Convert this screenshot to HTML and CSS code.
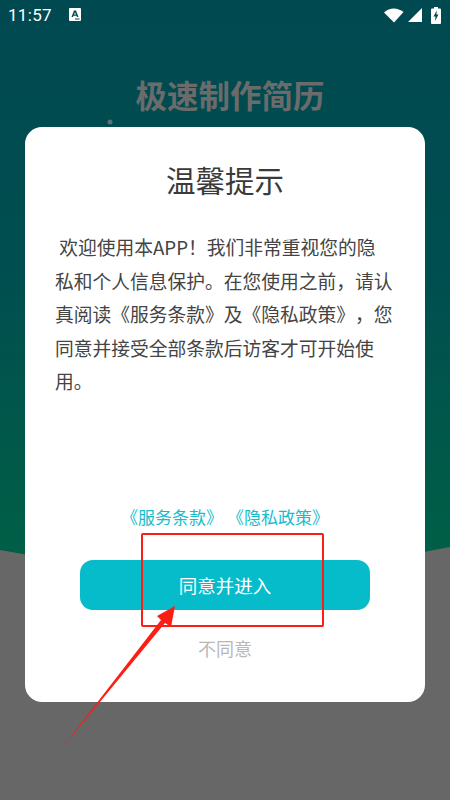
FILE: index.html
```html
<!DOCTYPE html>
<html lang="zh-CN">
<head>
<meta charset="utf-8">
<title>温馨提示</title>
<link rel="stylesheet" href="styles.css">
</head>
<body>
<div class="screen">
  <svg class="backdrop" width="450" height="800" viewBox="0 0 450 800">
    <defs>
      <linearGradient id="bg" x1="0" y1="0" x2="0" y2="1">
        <stop offset="0" stop-color="#004950"/>
        <stop offset="0.5" stop-color="#004f50"/>
        <stop offset="1" stop-color="#006045"/>
      </linearGradient>
    </defs>
    <rect width="450" height="800" fill="#676767"/>
    <path d="M0 550Q225 592 450 547V0H0Z" fill="url(#bg)"/>
    <circle cx="110" cy="122" r="2.500" fill="#587274"/>
  </svg>
  <header class="status">
    <span class="time">11:57</span>
    <svg class="a-icon" width="12" height="13" viewBox="0 0 12 13">
      <path fill="#fff" d="M1 0h10a1 1 0 0 1 1 1v11a1 1 0 0 1-1 1H1a1 1 0 0 1-1-1V1a1 1 0 0 1 1-1z"/>
      <path fill="#004950" d="M5 2.500h2l2.500 6.500H8L7.500 7.700h-3L4 9H2.500zM6 4.300 5 6.500h2zM6 10.500h4.500v1H6z"/>
    </svg>
    <span class="status-right">
      <svg width="20" height="15" viewBox="0 0 20 15"><path fill="#fff" d="M0 4.500C5.500-.9 13.500-.9 19.500 4L10 14.500z"/></svg>
      <svg width="14" height="14" viewBox="0 0 14 14"><path fill="#fff" d="M14 0v14H0z"/></svg>
      <svg width="10" height="17" viewBox="0 0 10 17"><path fill="#fff" d="M3 0h4v1.500h2a1 1 0 0 1 1 1V16a1 1 0 0 1-1 1H1a1 1 0 0 1-1-1V2.500a1 1 0 0 1 1-1h2z"/><path fill="#004950" d="M5.800 3.500 2.500 9.500h2l-.5 4.500 3.500-6.500h-2z"/></svg>
    </span>
  </header>
  <h2 class="brand">极速制作简历</h2>
  <main class="card">
    <h1 class="card-title">温馨提示</h1>
    <p class="card-text"> 欢迎使用本APP&#xFF01;我们非常重视您的隐私和个人信息保护。在您使用之前&#xFF0C;请认真阅读《服务条款》及《隐私政策》&#xFF0C;您同意并接受全部条款后访客才可开始使用。</p>
    <div class="links"><a>《服务条款》</a><a>《隐私政策》</a></div>
    <button class="agree">同意并进入</button>
    <div class="decline">不同意</div>
  </main>
  <div class="mark-box"></div>
  <svg class="mark-arrow" width="450" height="800" viewBox="0 0 450 800">
    <path fill="#fb1e14" d="M62 748 161 620 157 616 175 606 171 627 165 623Z"/>
  </svg>
</div>
</body>
</html>
```
FILE: styles.css
```css
* { box-sizing: border-box; }
html, body { margin: 0; padding: 0; }
body { font-family: "Noto Sans CJK SC", "Noto Sans", sans-serif; text-spacing-trim: space-all; }
.screen { position: relative; width: 450px; height: 800px; overflow: hidden; }
.backdrop, .mark-arrow { position: absolute; left: 0; top: 0; }
.status {
  position: relative; height: 30px; padding: 0 8px 0 8px;
  display: flex; align-items: center; color: #fff;
}
.time { font: 400 17px/30px Roboto, sans-serif; letter-spacing: .3px; }
.a-icon { margin-left: 17px; margin-top: -1px; }
.status-right { margin-left: auto; display: flex; align-items: center; gap: 4px; padding-right: 1px; }
.status-right svg:last-child { margin-left: 5px; }
.brand {
  position: relative; margin: 39px 0 0; height: 50px; padding-left: 10px;
  text-align: center; color: #6b6b6b;
  font-size: 31.5px; line-height: 50px; font-weight: 700;
}
.card {
  position: relative; margin: 8px 25px 0; height: 575px;
  background: #fff; border-radius: 17px; padding: 28px 30px 0;
  display: flex; flex-direction: column;
}
.card-title {
  margin: 0; text-align: center; font-size: 29.5px; line-height: 48px;
  font-weight: 400; color: #3a3a3a;
}
.card-text {
  margin: 27px 1.5px 0 0; font-size: 18.75px; line-height: 33.5px;
  color: #444; white-space: pre-wrap; height: 168px;
}
.links {
  margin-top: 106px; display: flex; justify-content: center; gap: 4px;
  color: #17bccb; font-size: 17px; line-height: 26px;
}
.agree {
  margin: 30px 25px 0; height: 50px; border: 0; border-radius: 13px;
  background: #06bccb; color: #fff; font: inherit; font-size: 18.5px;
}
.decline { margin-top: 23px; text-align: center; color: #b8b8b8; font-size: 18px; line-height: 30px; }
.mark-box {
  position: absolute; left: 141px; top: 533px; width: 183px; height: 94px;
  border: 2px solid #fb1e14; border-radius: 2px;
}
```
